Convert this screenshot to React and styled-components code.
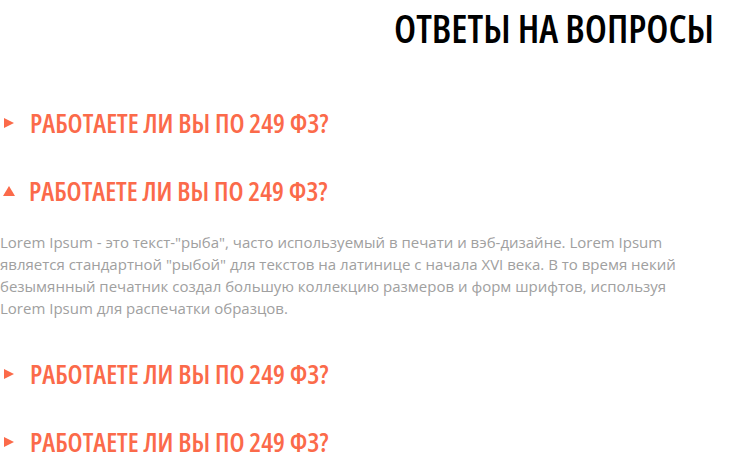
import styled, { createGlobalStyle } from "styled-components";

const GlobalStyle = createGlobalStyle`
  body {
    margin: 0;
    background: #ffffff;
    font-family: "Open Sans", "Liberation Sans", sans-serif;
  }
`;

const Section = styled.section`
  width: 730px;
  height: 453px;
  overflow: hidden;
`;

const Header = styled.div`
  height: 89px;
  display: flex;
  justify-content: flex-end;
  padding-right: 16px;
  box-sizing: border-box;
`;

const Title = styled.h2`
  margin: 0;
  padding-top: 5px;
  font-family: "Open Sans", "DejaVu Sans", sans-serif;
  font-stretch: 75%;
  font-weight: 600;
  font-size: 39px;
  line-height: 46px;
  color: #000;
  text-transform: uppercase;
`;

const List = styled.div`
  display: flex;
  flex-direction: column;
`;

const QuestionRow = styled.div`
  height: 68px;
  display: flex;
  align-items: center;
  gap: 16px;
  cursor: pointer;
`;

const Arrow = styled.span`
  flex: none;
  width: 0;
  height: 0;
  margin-left: ${(p) => (p.open ? "3px" : "4px")};
  margin-right: ${(p) => (p.open ? "-2px" : "0")};
  border-style: solid;
  border-color: transparent;
  ${(p) =>
    p.open
      ? `
    border-width: 0 6.5px 10px 6.5px;
    border-bottom-color: #fb6a4a;
  `
      : `
    border-width: 5.5px 0 5.5px 10px;
    border-left-color: #fb6a4a;
  `}
`;

const Question = styled.span`
  font-family: "Open Sans", "DejaVu Sans", sans-serif;
  font-stretch: 75%;
  font-weight: 600;
  font-size: 26.5px;
  line-height: 20px;
  color: #fb6a4a;
  text-transform: uppercase;
`;

const Answer = styled.p`
  margin: 0 0 21px;
  padding-top: 6px;
  padding-right: 8px;
  font-size: 15px;
  line-height: 22px;
  color: #a0a0a0;
`;

const faq = [
  { q: "Работаете ли вы по 249 ФЗ?" },
  {
    q: "Работаете ли вы по 249 ФЗ?",
    a: 'Lorem\u00a0Ipsum - это текст-"рыба", часто используемый в печати и вэб-дизайне. Lorem\u00a0Ipsum является стандартной "рыбой" для текстов на латинице с начала XVI века. В то время некий безымянный печатник создал большую коллекцию размеров и форм шрифтов, используя Lorem\u00a0Ipsum для распечатки образцов.',
  },
  { q: "Работаете ли вы по 249 ФЗ?" },
  { q: "Работаете ли вы по 249 ФЗ?" },
];

export default function App() {
  return (
    <Section>
      <GlobalStyle />
      <Header>
        <Title>Ответы на вопросы</Title>
      </Header>
      <List>
        {faq.map((item, i) => (
          <div key={i}>
            <QuestionRow>
              <Arrow open={!!item.a} />
              <Question>{item.q}</Question>
            </QuestionRow>
            {item.a && <Answer>{item.a}</Answer>}
          </div>
        ))}
      </List>
    </Section>
  );
}
